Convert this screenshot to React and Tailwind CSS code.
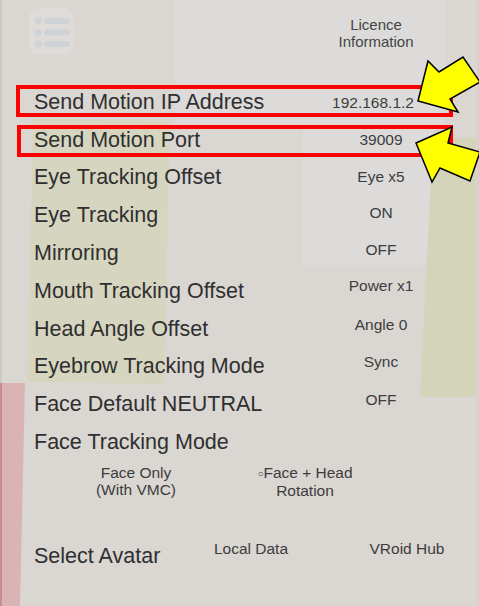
import React from "react";

const rows = [
  { label: "Send Motion IP Address", value: "192.168.1.2", v: "translate-y-[1px] -translate-x-[8px]" },
  { label: "Send Motion Port", value: "39009", v: "translate-y-[0px]" },
  { label: "Eye Tracking Offset", value: "Eye x5", v: "-translate-y-[1px]" },
  { label: "Eye Tracking", value: "ON", v: "-translate-y-[3px]" },
  { label: "Mirroring", value: "OFF", v: "-translate-y-[4px]" },
  { label: "Mouth Tracking Offset", value: "Power x1", v: "-translate-y-[5px]" },
  { label: "Head Angle Offset", value: "Angle 0", v: "-translate-y-[4px]" },
  { label: "Eyebrow Tracking Mode", value: "Sync", v: "-translate-y-[5px]" },
  { label: "Face Default NEUTRAL", value: "OFF", v: "-translate-y-[5px]" },
  { label: "Face Tracking Mode", value: "", v: "" },
];

function MenuIcon() {
  return (
    <div className="w-[45px] h-[47px] rounded-[10px] bg-[#dedbd8] flex items-center justify-center">
      <svg width="45" height="47" viewBox="0 0 45 47">
        <g fill="#cfd3d8">
          <circle cx="9" cy="13" r="3.4" />
          <circle cx="9" cy="24.5" r="3.4" />
          <circle cx="9" cy="36" r="3.4" />
        </g>
        <g stroke="#cfd3d8" strokeWidth="6" strokeLinecap="round">
          <line x1="18" y1="13" x2="38" y2="13" />
          <line x1="18" y1="24.5" x2="38" y2="24.5" />
          <line x1="18" y1="36" x2="38" y2="36" />
        </g>
      </svg>
    </div>
  );
}

export default function App() {
  return (
    <div
      className="relative w-[479px] h-[606px] overflow-hidden bg-[#dad6d2] text-[#2f2f2f]"
      style={{ fontFamily: '"Liberation Sans", Arial, sans-serif' }}
    >
      {/* background canvas shapes */}
      <div className="absolute left-[175px] top-0 w-[270px] h-[125px] bg-[#dcdbda]" />
      <div className="absolute left-[303px] top-[125px] w-[130px] h-[140px] bg-[#dcdbda]" />
      <div className="absolute left-[30px] top-[120px] w-[137px] h-[263px] bg-[#d6d6c0] rotate-[1.3deg]" />
      <div className="absolute left-0 top-[138px] w-[479px] h-[259px] bg-[#d3d4b9] [clip-path:polygon(433px_0,476px_0,476px_259px,420px_259px)]" />
      <div className="absolute left-0 top-[383px] w-[26px] h-[223px] bg-[#dab4b5] [clip-path:polygon(0_0,25px_0,20px_223px,0_223px)]" />
      <div className="absolute left-0 top-[383px] w-[2px] h-[223px] bg-[#c98c90]" />
      <div className="absolute left-0 top-0 w-[2px] h-[383px] bg-[#cdc8c4]" />
      <div className="absolute right-0 top-0 w-[2px] h-[606px] bg-[#d4d1cd]" />

      {/* content */}
      <div className="relative flex flex-col">
        <div className="flex justify-between h-[83px]">
          <div className="ml-[29px] mt-[8px]">
            <MenuIcon />
          </div>
          <div className="mr-[53px] pt-[16px] w-[100px] text-center text-[15px] leading-[17px] text-[#444]">
            Licence
            <br />
            Information
          </div>
        </div>

        {rows.map((r) => (
          <div key={r.label} className="flex items-center h-[37.8px]">
            <div className="flex-1 pl-[34px] text-[21.5px] leading-[24px] whitespace-nowrap">{r.label}</div>
            <div className={"w-[100px] mr-[48px] text-center text-[15.5px] leading-[17px] text-[#3d3d3d] " + r.v}>
              {r.value}
            </div>
          </div>
        ))}

        <div className="flex mt-[3px] text-[15.5px] leading-[17px] text-[#3d3d3d]">
          <div className="ml-[86px] w-[100px] text-center">
            Face Only
            <br />
            (With VMC)
          </div>
          <div className="ml-[59px] w-[120px] text-center">
            <span className="text-[10px] align-[1px]">○</span>Face + Head
            <br />
            Rotation
          </div>
        </div>

        <div className="flex items-center h-[38px] mt-[38px]">
          <div className="w-[201px] pl-[34px] text-[21.5px] leading-[24px] whitespace-nowrap">Select Avatar</div>
          <div className="w-[100px] text-center text-[15.5px] leading-[17px] text-[#3d3d3d] -translate-y-[7px]">Local Data</div>
          <div className="ml-[56px] w-[100px] text-center text-[15.5px] leading-[17px] text-[#3d3d3d] -translate-y-[7px]">VRoid Hub</div>
        </div>
      </div>

      {/* annotation boxes */}
      <div className="absolute left-[16px] top-[85px] w-[437px] h-[32px] border-[4px] border-[#ff0000]" />
      <div className="absolute left-[17px] top-[125px] w-[436px] h-[32px] border-[4px] border-[#ff0000]" />

      {/* annotation arrows */}
      <svg className="absolute left-0 top-0 pointer-events-none" width="479" height="606" viewBox="0 0 479 606">
        <polygon
          points="418,101 428,61 439,72 463,57 480,82 450,99 458,112"
          fill="#ffff00"
          stroke="#000"
          strokeWidth="1.5"
          strokeLinejoin="miter"
        />
        <polygon
          points="416,143 452,127 448,143 480,152 470,181 440,168 432,182"
          fill="#ffff00"
          stroke="#000"
          strokeWidth="1.5"
          strokeLinejoin="miter"
        />
      </svg>
    </div>
  );
}
